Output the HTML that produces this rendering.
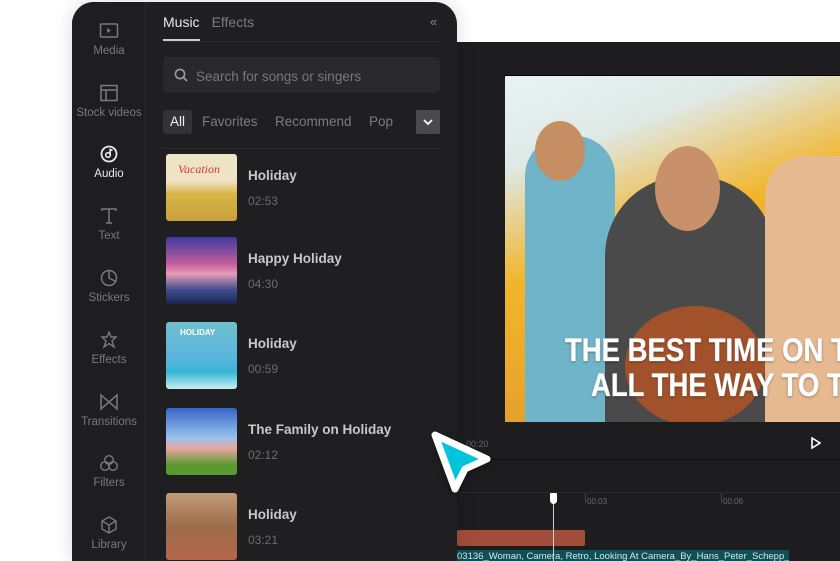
<!DOCTYPE html>
<html><head><style>
*{margin:0;padding:0;box-sizing:border-box}
html,body{width:840px;height:561px;overflow:hidden}
body{background:#fff;font-family:"Liberation Sans",sans-serif;position:relative}
.ed{position:absolute;left:440px;top:42px;width:400px;height:519px;background:#1d1d1f;overflow:hidden}
.panel{position:absolute;left:72px;top:2px;width:385px;height:559px;background:#1f1f21;border-radius:22px 22px 0 0;box-shadow:0 0 18px rgba(0,0,0,.15);overflow:hidden}
.side{position:absolute;left:0;top:0;width:74px;height:100%;border-right:1px solid #2c2c2e;background:#1e1e20}
.it{position:absolute;left:0;width:74px;text-align:center;color:#7a7a7e;font-size:11.5px}
.it svg{display:block;margin:0 auto 5px}
.tabs{position:absolute;left:91px;top:12px;font-size:14px;color:#7c7c80}
.tabs b{color:#e8e8ea;font-weight:normal;margin-right:12px}
.search{position:absolute;left:91px;top:55px;width:277px;height:36px;background:#29292c;border-radius:5px;color:#78787c;font-size:13.5px;padding:12px 0 0 33px}
.chips{position:absolute;left:91px;top:108px;font-size:13.5px;color:#7c7c80;width:277px;height:24px}
.chips span{position:absolute;top:4px}
.row{position:absolute;left:94px;width:280px;height:71px}
.th{position:absolute;left:0;top:0;width:71px;height:67px;border-radius:3px}
.tt{position:absolute;left:82px;top:14px;color:#c8c8cc;font-size:13.5px;font-weight:bold}
.td{position:absolute;left:82px;top:40px;color:#6c6c70;font-size:12px}
.pv{position:absolute;left:505px;top:76px;width:335px;height:346px;overflow:hidden;background:linear-gradient(160deg,#e9f3f2 0%,#dfe9e6 20%,#f2b52a 45%,#e8a52b 70%,#c98a3b 100%)}
.cap{position:absolute;color:#fff;font-weight:bold;font-size:32px;white-space:nowrap;text-shadow:0 0 1px #fff,0 1px 3px rgba(0,0,0,.4);transform:scaleX(.86);transform-origin:left top}
</style></head><body>
<div class="ed">
 <div style="position:absolute;top:33px;width:400px;height:2px;background:#000;left:64px"></div>
 <div style="position:absolute;left:0;top:417px;width:400px;height:1px;background:#111"></div>
 <div style="position:absolute;left:0;top:450px;width:400px;height:1px;background:#2a2a2c"></div>
 <div style="position:absolute;left:26px;top:397px;color:#666;font-size:9px">00:20</div>
 <svg style="position:absolute;left:371px;top:395px" width="10" height="12"><path d="M1 1L9 6L1 11Z" fill="none" stroke="#fff" stroke-width="1.6"/></svg>
 <div style="position:absolute;left:147px;top:455px;color:#6a6a6e;font-size:8px">00:03</div>
 <div style="position:absolute;left:283px;top:455px;color:#6a6a6e;font-size:8px">00:06</div>
 <div style="position:absolute;left:145px;top:451px;width:1px;height:10px;background:#444"></div>
 <div style="position:absolute;left:281px;top:451px;width:1px;height:10px;background:#444"></div>
 <div style="position:absolute;left:17px;top:488px;width:128px;height:16px;background:#a24d3a;border-radius:2px"></div>
 <div style="position:absolute;left:17px;top:508px;width:332px;height:14px;background:#0f4f57;color:#d5e6e8;font-size:9.5px;padding:1px 0 0 0;white-space:nowrap;overflow:hidden">03136_Woman, Camera, Retro, Looking At Camera_By_Hans_Peter_Schepp_Artlist_HD.mp</div>
 <div style="position:absolute;left:113px;top:451px;width:1px;height:80px;background:#ccc"></div>
 <div style="position:absolute;left:110px;top:451px;width:7px;height:11px;background:#fff;border-radius:1px 1px 4px 4px"></div>
</div>
<div class="pv">
 <div style="position:absolute;left:20px;top:60px;width:90px;height:300px;background:#6fb4c8;border-radius:40px 40px 0 0"></div>
 <div style="position:absolute;left:30px;top:45px;width:50px;height:60px;background:#c58f63;border-radius:50%"></div>
 <div style="position:absolute;left:100px;top:100px;width:170px;height:260px;background:#4a4a4a;border-radius:80px 80px 0 0"></div>
 <div style="position:absolute;left:150px;top:70px;width:65px;height:85px;background:#c8916b;border-radius:50%"></div>
 <div style="position:absolute;left:120px;top:230px;width:140px;height:120px;background:#a2522a;border-radius:50%"></div>
 <div style="position:absolute;left:260px;top:80px;width:90px;height:280px;background:#e7b990;border-radius:40px 0 0 0"></div>
 <div class="cap" style="left:60px;top:256px">THE BEST TIME ON T</div>
 <div class="cap" style="left:86px;top:291px">ALL THE WAY TO T</div>
</div>
<div class="panel">
 <div class="side">
  <div class="it" style="top:20px"><svg width="20" height="18"><rect x="1.5" y="2" width="17" height="13" rx="1" fill="none" stroke="#7a7a7e" stroke-width="1.5"/><path d="M8 6L12 8.5L8 11Z" fill="#7a7a7e"/></svg>Media</div>
  <div class="it" style="top:82px"><svg width="20" height="18"><rect x="2" y="1.5" width="16" height="15" fill="none" stroke="#7a7a7e" stroke-width="1.5"/><path d="M2 6H18M7 6V16.5" stroke="#7a7a7e" stroke-width="1.5"/></svg>Stock videos</div>
  <div class="it" style="top:143px;color:#e8e8ea"><svg width="20" height="18"><circle cx="10" cy="9" r="7.5" fill="none" stroke="#e8e8ea" stroke-width="1.8"/><circle cx="9" cy="10" r="2.3" fill="none" stroke="#e8e8ea" stroke-width="1.6"/><path d="M11.2 10V4.5L13.5 5.5" fill="none" stroke="#e8e8ea" stroke-width="1.6"/></svg>Audio</div>
  <div class="it" style="top:205px"><svg width="20" height="18"><path d="M3 4V2H17V4M10 2V16M7 16H13" fill="none" stroke="#7a7a7e" stroke-width="1.5"/></svg>Text</div>
  <div class="it" style="top:267px"><svg width="20" height="18"><circle cx="10" cy="9" r="7.5" fill="none" stroke="#7a7a7e" stroke-width="1.5"/><path d="M10 1.5V9L16 12" fill="none" stroke="#7a7a7e" stroke-width="1.5"/></svg>Stickers</div>
  <div class="it" style="top:329px"><svg width="20" height="18"><path d="M10 1L12 6L17 6L13 10L15 16L10 12.5L5 16L7 10L3 6L8 6Z" fill="none" stroke="#7a7a7e" stroke-width="1.4"/></svg>Effects</div>
  <div class="it" style="top:391px"><svg width="20" height="18"><path d="M2 2V16L18 2V16Z" fill="none" stroke="#7a7a7e" stroke-width="1.5"/></svg>Transitions</div>
  <div class="it" style="top:452px"><svg width="20" height="18"><circle cx="10" cy="6" r="4.3" fill="none" stroke="#7a7a7e" stroke-width="1.4"/><circle cx="6" cy="12" r="4.3" fill="none" stroke="#7a7a7e" stroke-width="1.4"/><circle cx="14" cy="12" r="4.3" fill="none" stroke="#7a7a7e" stroke-width="1.4"/></svg>Filters</div>
  <div class="it" style="top:514px"><svg width="20" height="18"><path d="M10 1L17 5V13L10 17L3 13V5ZM3 5L10 9L17 5M10 9V17" fill="none" stroke="#7a7a7e" stroke-width="1.4"/></svg>Library</div>
 </div>
 <div class="tabs"><b>Music</b>Effects</div>
 <div style="position:absolute;left:91px;top:37px;width:37px;height:2px;background:#ccc"></div>
 <div style="position:absolute;left:91px;top:39px;width:277px;height:1px;background:#2c2c2e"></div>
 <div style="position:absolute;left:358px;top:12px;color:#888;font-size:13px">«</div>
 <div class="search"><svg style="position:absolute;left:11px;top:11px" width="14" height="14"><circle cx="6" cy="6" r="4.6" fill="none" stroke="#9a9a9e" stroke-width="1.6"/><path d="M9.5 9.5L13 13" stroke="#9a9a9e" stroke-width="1.8"/></svg>Search for songs or singers</div>
 <div class="chips">
  <div style="position:absolute;left:0;top:0;width:29px;height:24px;background:#333336;border-radius:3px"></div>
  <span style="left:7px;color:#f0f0f2">All</span><span style="left:39px">Favorites</span><span style="left:112px">Recommend</span><span style="left:206px">Pop</span>
  <div style="position:absolute;left:253px;top:0;width:24px;height:24px;background:#4a4a4e;border-radius:2px"></div>
  <svg style="position:absolute;left:260px;top:8px" width="10" height="8"><path d="M1 2L5 6L9 2" fill="none" stroke="#fff" stroke-width="1.8"/></svg>
 </div>
 <div style="position:absolute;left:91px;top:146px;width:277px;height:1px;background:#2c2c2e"></div>
 <div class="row" style="top:152px"><div class="th" style="background:linear-gradient(#efe3c6 0 40%,#d9b445 60%,#c8a040)"></div><div style="position:absolute;left:12px;top:8px;color:#d03a3a;font-style:italic;font-size:12px;font-family:'Liberation Serif',serif">Vacation</div><div class="tt">Holiday</div><div class="td">02:53</div></div>
 <div class="row" style="top:235px"><div class="th" style="background:linear-gradient(#3f3aa0,#c35d9c 40%,#e49cb6 55%,#3b4a8c 80%,#1c2550)"></div><div class="tt">Happy Holiday</div><div class="td">04:30</div></div>
 <div class="row" style="top:320px"><div class="th" style="background:linear-gradient(#6fc0cd,#5ab3dc 55%,#36b7d4 75%,#c9eef0)"></div><div style="position:absolute;left:14px;top:6px;color:#fff;font-size:8px;font-weight:bold">HOLIDAY</div><div class="tt">Holiday</div><div class="td">00:59</div></div>
 <div class="row" style="top:406px"><div class="th" style="background:linear-gradient(#3566c8,#9cc3ec 45%,#e9a7a0 60%,#5a9a30 85%)"></div><div class="tt">The Family on Holiday</div><div class="td">02:12</div></div>
 <div class="row" style="top:491px"><div class="th" style="background:linear-gradient(#c19b77,#9c6c4a 50%,#b4664a)"></div><div class="tt">Holiday</div><div class="td">03:21</div></div>
</div>
<svg style="position:absolute;left:425px;top:425px" width="72" height="72"><path d="M10 10L62 34L40 44L30 64Z" fill="#00c4dc" stroke="#fff" stroke-width="7" stroke-linejoin="round" style="filter:drop-shadow(0 2px 4px rgba(0,0,0,.3))"/></svg>
</body></html>
